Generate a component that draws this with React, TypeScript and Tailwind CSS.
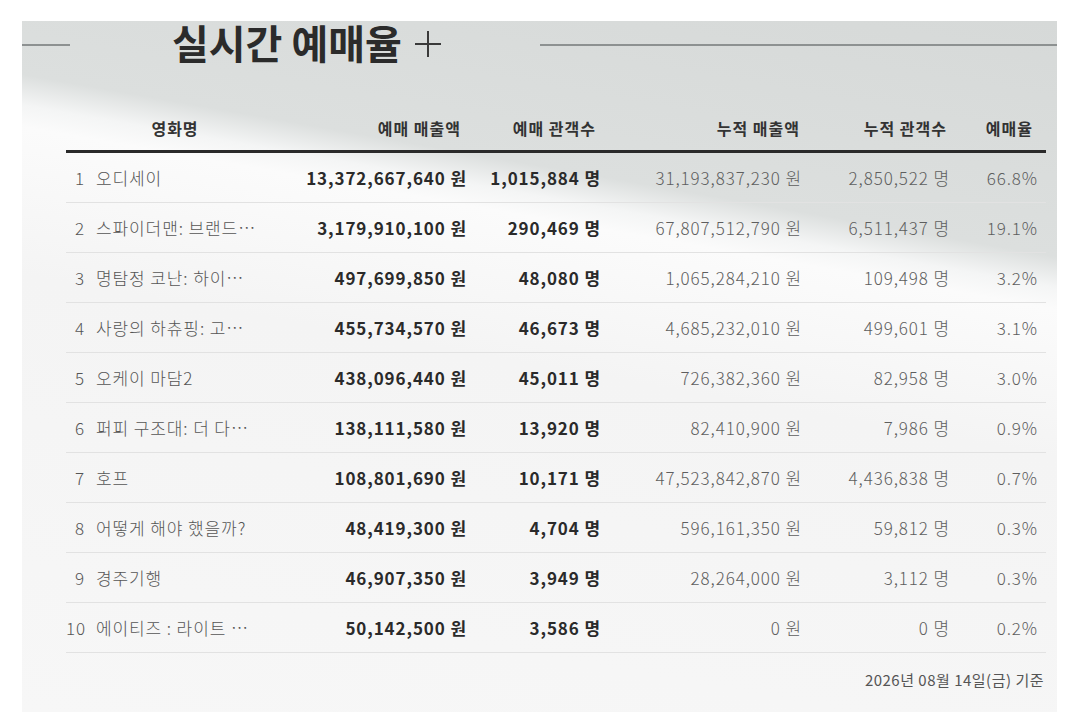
import React from "react";

type Row = {
  rank: number;
  title: string;
  sales: string;
  audience: string;
  totalSales: string;
  totalAudience: string;
  rate: string;
};

const rows: Row[] = [
  { rank: 1, title: "오디세이", sales: "13,372,667,640 원", audience: "1,015,884 명", totalSales: "31,193,837,230 원", totalAudience: "2,850,522 명", rate: "66.8%" },
  { rank: 2, title: "스파이더맨: 브랜드⋯", sales: "3,179,910,100 원", audience: "290,469 명", totalSales: "67,807,512,790 원", totalAudience: "6,511,437 명", rate: "19.1%" },
  { rank: 3, title: "명탐정 코난: 하이⋯", sales: "497,699,850 원", audience: "48,080 명", totalSales: "1,065,284,210 원", totalAudience: "109,498 명", rate: "3.2%" },
  { rank: 4, title: "사랑의 하츄핑: 고⋯", sales: "455,734,570 원", audience: "46,673 명", totalSales: "4,685,232,010 원", totalAudience: "499,601 명", rate: "3.1%" },
  { rank: 5, title: "오케이 마담2", sales: "438,096,440 원", audience: "45,011 명", totalSales: "726,382,360 원", totalAudience: "82,958 명", rate: "3.0%" },
  { rank: 6, title: "퍼피 구조대: 더 다⋯", sales: "138,111,580 원", audience: "13,920 명", totalSales: "82,410,900 원", totalAudience: "7,986 명", rate: "0.9%" },
  { rank: 7, title: "호프", sales: "108,801,690 원", audience: "10,171 명", totalSales: "47,523,842,870 원", totalAudience: "4,436,838 명", rate: "0.7%" },
  { rank: 8, title: "어떻게 해야 했을까?", sales: "48,419,300 원", audience: "4,704 명", totalSales: "596,161,350 원", totalAudience: "59,812 명", rate: "0.3%" },
  { rank: 9, title: "경주기행", sales: "46,907,350 원", audience: "3,949 명", totalSales: "28,264,000 원", totalAudience: "3,112 명", rate: "0.3%" },
  { rank: 10, title: "에이티즈 : 라이트 ⋯", sales: "50,142,500 원", audience: "3,586 명", totalSales: "0 원", totalAudience: "0 명", rate: "0.2%" },
];

const grid = "grid grid-cols-[218px_183px_134px_201px_148px_96px]";

function PlusIcon() {
  return (
    <svg width="26" height="26" viewBox="0 0 26 26" className="ml-[13px] mb-[-4px]" aria-label="더보기">
      <path d="M0 13h26M13 0v26" stroke="#3a3a3a" strokeWidth="2" fill="none" />
    </svg>
  );
}

export default function App() {
  return (
    <div className="min-h-[717px] w-[1080px] bg-white pt-[21px] font-['Noto_Sans_CJK_KR','Noto_Sans',sans-serif]">
      <section className="ml-[22px] h-[691px] w-[1035px] bg-[linear-gradient(190deg,#d6d9d8_0%,#dcdfde_27%,#f4f5f5_30.5%,#fbfbfb_33%,#f4f4f4_50%,#f7f7f7_100%)]">
        {/* title with rules */}
        <div className="flex h-[48px] items-center">
          <div className="h-[2px] w-[48px] bg-[#8d9191]" />
          <h2 className="ml-[102px] flex w-[368px] items-center pb-[6px] text-[40px] leading-none font-bold text-[#2b2b2b]">
            실시간 예매율
            <PlusIcon />
          </h2>
          <div className="h-[2px] flex-1 bg-[#8d9191]" />
        </div>

        <div className="ml-[44px] mt-[45px] w-[980px]">
          <div className={`${grid} h-[39px] items-center border-b-[3px] border-[#2a2a2a] text-[16px] font-bold tracking-[1px] text-[#333]`}>
            <div className="pb-[8px] text-center">영화명</div>
            <div className="pb-[8px] pr-[6px] text-right">예매 매출액</div>
            <div className="pb-[8px] pr-[5px] text-right">예매 관객수</div>
            <div className="pb-[8px] pr-[2px] text-right">누적 매출액</div>
            <div className="pb-[8px] pr-[3px] text-right">누적 관객수</div>
            <div className="pb-[8px] pr-[13px] text-right">예매율</div>
          </div>

          {rows.map((r) => (
            <div
              key={r.rank}
              className={`${grid} h-[50px] items-center border-b border-[#e2e2e2] text-[17px] tracking-[0.9px]`}
            >
              <div className="flex items-center font-light text-[#555]">
                <span className="w-[19px] text-right">{r.rank}</span>
                <span className="ml-[11px] whitespace-nowrap">{r.title}</span>
              </div>
              <div className="text-right font-bold text-[#2a2a2a]">{r.sales}</div>
              <div className="text-right font-bold text-[#2a2a2a]">{r.audience}</div>
              <div className="text-right font-light text-[#5e5e5e]">{r.totalSales}</div>
              <div className="text-right font-light text-[#5e5e5e]">{r.totalAudience}</div>
              <div className="pr-[8px] text-right font-light text-[#5e5e5e]">{r.rate}</div>
            </div>
          ))}

          <p className="mt-[16px] pr-[2px] text-right text-[15px] tracking-[0.5px] text-[#555]">
            2026년 08월 14일(금) 기준
          </p>
        </div>
      </section>
    </div>
  );
}
